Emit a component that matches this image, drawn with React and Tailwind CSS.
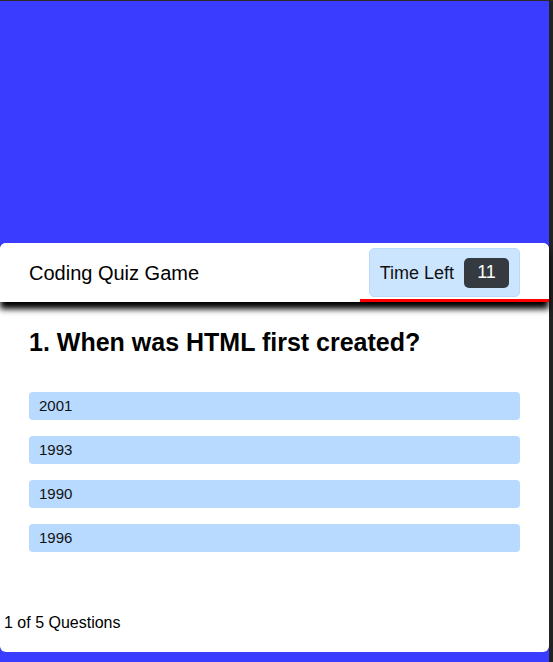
const answers = ['2001', '1993', '1990', '1996'];

export default function App() {
  return (
    <div className="flex h-[662px] w-[553px] border-t border-[#2b2b2b] bg-[#3a3dff] font-['Liberation_Sans',Arial,sans-serif] text-black">
      <div className="flex flex-1 flex-col pt-[242px] pb-[10px]">
        <div className="flex flex-1 flex-col rounded-md bg-white">
          {/* Header */}
          <header className="relative z-10 flex h-[59px] items-stretch justify-between rounded-t-md bg-white shadow-[0_7px_6px_#000]">
            <h1 className="self-center pl-[29px] text-[20px] leading-6">Coding Quiz Game</h1>
            <div className="flex w-[189px] items-start justify-end border-b-[3px] border-[#ff0000] pr-[29px] pt-[5px]">
              <div className="flex h-[49px] items-center gap-[10px] rounded-[5px] border border-[#b8daff] bg-[#cce5ff] pl-[10px] pr-[10px]">
                <span className="text-[18px] leading-6 text-[#111]">Time Left</span>
                <span className="flex h-[30px] w-[45px] items-center justify-center rounded-[5px] bg-[#343a40] text-[18px] text-white">
                  11
                </span>
              </div>
            </div>
          </header>

          {/* Question */}
          <main className="flex flex-1 flex-col px-[29px] pt-[26px]">
            <h2 className="text-[25px] font-bold leading-7">1. When was HTML first created?</h2>
            <ul className="mt-[36px] flex flex-col gap-4">
              {answers.map((a) => (
                <li
                  key={a}
                  className="flex h-[28px] items-center rounded-[4px] bg-[#b8daff] pl-[10px] text-[15px] text-[#111]"
                >
                  {a}
                </li>
              ))}
            </ul>
          </main>

          <footer className="pb-[20px] pl-[4px] text-[16px] leading-[18px]">1 of 5 Questions</footer>
        </div>
      </div>
      <div className="w-[4px] bg-[#222]" />
    </div>
  );
}
